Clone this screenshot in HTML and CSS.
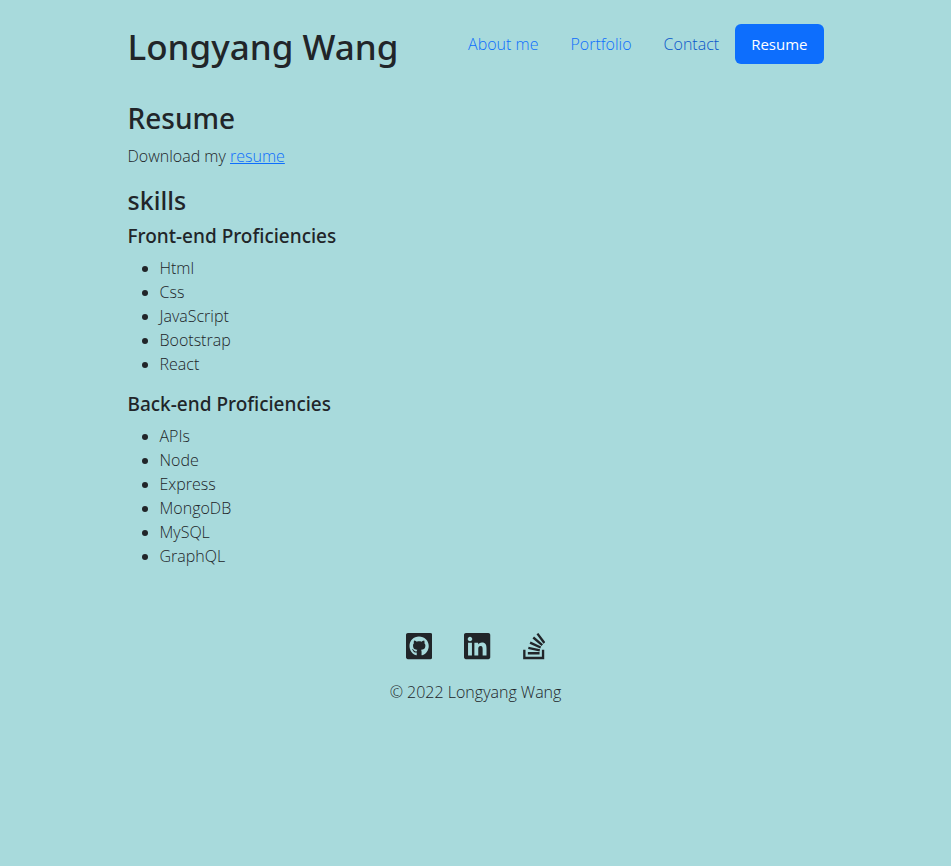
FILE: index.html
```html
<!DOCTYPE html>
<html lang="en">
<head>
<meta charset="utf-8">
<meta name="viewport" content="width=device-width, initial-scale=1">
<title>Longyang Wang</title>
<link rel="stylesheet" href="styles.css">
</head>
<body>
<div class="container">
  <header class="header">
    <h1>Longyang Wang</h1>
    <nav class="nav">
      <a class="nav-link" href="#about">About me</a>
      <a class="nav-link" href="#portfolio">Portfolio</a>
      <a class="nav-link highlighted" href="#contact">Contact</a>
      <a class="nav-link active" href="#resume">Resume</a>
    </nav>
  </header>
  <main>
    <h2>Resume</h2>
    <p>Download my <a href="#download">resume</a></p>
    <h3>skills</h3>
    <h4>Front-end Proficiencies</h4>
    <ul>
      <li>Html</li>
      <li>Css</li>
      <li>JavaScript</li>
      <li>Bootstrap</li>
      <li>React</li>
    </ul>
    <h4>Back-end Proficiencies</h4>
    <ul>
      <li>APIs</li>
      <li>Node</li>
      <li>Express</li>
      <li>MongoDB</li>
      <li>MySQL</li>
      <li>GraphQL</li>
    </ul>
  </main>
  <footer class="footer">
    <div class="social">
      <a href="#github" aria-label="GitHub"><svg viewBox="0 0 448 512"><path d="M416 32H32C14.300 32 0 46.300 0 64v384c0 17.700 14.300 32 32 32h384c17.700 0 32-14.300 32-32V64c0-17.700-14.300-32-32-32zM277.300 415.700c-8.400 1.500-11.500-3.700-11.500-8 0-5.400.2-33 .2-55.300 0-15.600-5.200-25.500-11.300-30.700 37-4.100 76-9.200 76-73.100 0-18.200-6.500-27.300-17.100-39 1.700-4.300 7.400-22-1.700-45-13.900-4.300-45.700 17.900-45.700 17.900-13.200-3.700-27.500-5.600-41.600-5.600-14.100 0-28.400 1.900-41.600 5.600 0 0-31.800-22.200-45.700-17.900-9.100 22.900-3.500 40.600-1.700 45-10.600 11.700-15.600 20.800-15.600 39 0 63.600 37.300 69 74.300 73.100-4.800 4.300-9.100 11.700-10.600 22.300-9.500 4.300-33.800 11.700-48.300-13.900-9.100-15.800-25.500-17.100-25.500-17.100-16.200-.2-1.100 10.200-1.100 10.200 10.800 5 18.400 24.200 18.400 24.200 9.700 29.700 56.100 19.700 56.100 19.700 0 13.900.2 36.500.2 40.600 0 4.300-3 9.500-11.500 8-66-22.100-112.200-84.900-112.200-158.300 0-91.800 70.200-161.500 162-161.500S388 165.600 388 257.400c.1 73.400-44.700 136.300-110.700 158.300z"/></svg></a>
      <a href="#linkedin" aria-label="LinkedIn"><svg viewBox="0 0 448 512"><path d="M416 32H31.900C14.300 32 0 46.500 0 64.300v383.400C0 465.500 14.300 480 31.900 480H416c17.600 0 32-14.500 32-32.300V64.300c0-17.800-14.400-32.300-32-32.300zM135.400 416H69V202.200h66.500V416zm-33.200-243c-21.300 0-38.500-17.300-38.500-38.500S80.900 96 102.200 96c21.200 0 38.500 17.300 38.500 38.500 0 21.300-17.200 38.500-38.500 38.500zm282.100 243h-66.400V312c0-24.800-.5-56.700-34.500-56.700-34.600 0-39.900 27-39.900 54.900V416h-66.400V202.200h63.700v29.200h.9c8.900-16.800 30.600-34.500 62.900-34.500 67.200 0 79.700 44.300 79.700 101.900V416z"/></svg></a>
      <a href="#stackoverflow" aria-label="Stack Overflow"><svg viewBox="0 0 384 512"><path d="M290.700 311L95 269.700 86.800 309l195.700 41zm51-87L188.200 95.700l-25.500 30.800 153.500 128.300zm-31.200 39.700L129.200 179l-16.700 36.500L293.700 300zM262 32l-32 24 119.300 160.300 32-24zm20.500 328h-200v39.700h200zm39.700 80H42.700V320h-40v160h359.500V320h-40z"/></svg></a>
    </div>
    <p>© 2022 Longyang Wang</p>
  </footer>
</div>
</body>
</html>
```
FILE: styles.css
```css
* { box-sizing: border-box; }

body {
  margin: 0;
  background: #a8dadc;
  color: #212529;
  font-family: "Open Sans", "Noto Sans", sans-serif;
  font-size: 16px;
  font-weight: 300;
  line-height: 24px;
}

.container {
  max-width: 720px;
  margin: 0 auto;
  padding: 24px 12px;
}

a { color: #0d6efd; }

h1, h2, h3, h4 {
  margin: 0 0 8px;
  font-family: "Noto Sans", "Open Sans", sans-serif;
  font-weight: 500;
}

h1 { margin: 0; font-size: 35px; line-height: 46px; }
h2 { font-size: 28px; line-height: 36px; }
h3 { font-size: 25px; line-height: 32px; }
h4 { font-size: 19px; line-height: 24px; }

p { margin: 0 0 16px; }

ul { margin: 0 0 16px; padding-left: 32px; }

.header {
  display: flex;
  flex-wrap: wrap;
  align-items: flex-start;
  justify-content: space-between;
  margin-bottom: 30px;
}

.nav { display: flex; flex-wrap: wrap; }

.nav-link {
  padding: 8px 16px;
  border-radius: 6px;
  text-decoration: none;
}

.nav-link.highlighted { color: #0a58ca; }

.nav-link.active {
  background: #0d6efd;
  color: #fff;
  font-size: 15px;
  font-weight: 400;
}

.footer {
  padding-top: 47px;
  text-align: center;
}

.social {
  display: flex;
  justify-content: center;
  gap: 32px;
  margin-bottom: 19px;
}

.social a { color: #212529; }

.social svg {
  display: block;
  height: 30px;
  fill: currentColor;
}
```
